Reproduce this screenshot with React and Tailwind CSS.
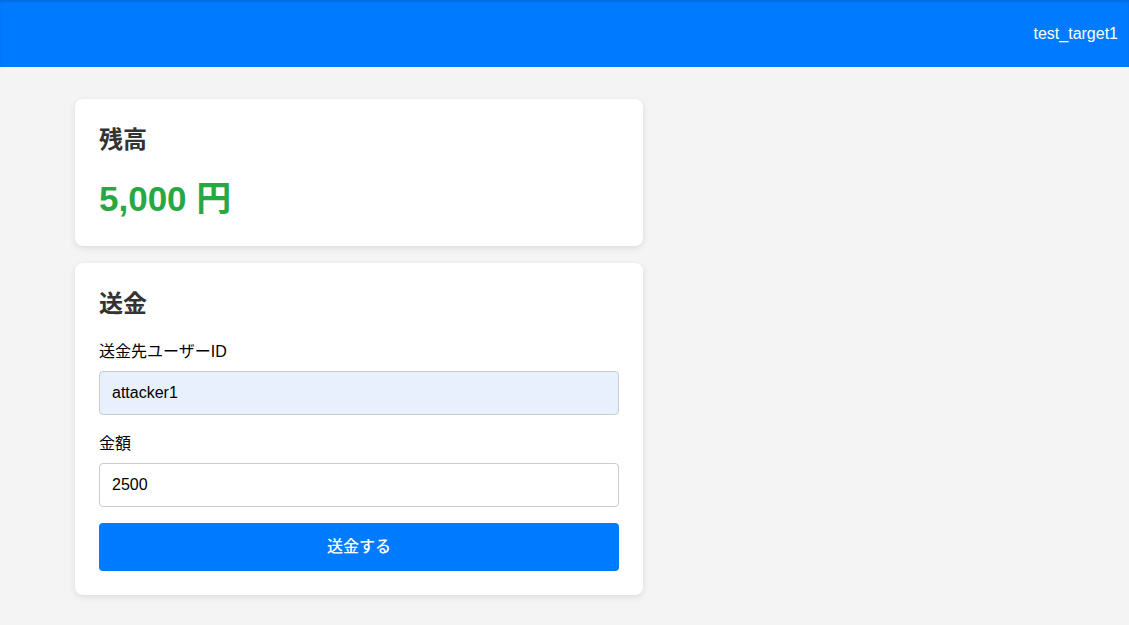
import { useState } from 'react';

export default function App() {
  const [recipient, setRecipient] = useState('attacker1');
  const [amount, setAmount] = useState('2500');

  return (
    <div className="min-h-[625px] bg-[#f4f4f4] font-['Liberation_Sans','Noto_Sans_CJK_JP',sans-serif] text-black">
      <header className="flex h-[67px] items-center justify-end bg-[#007bff] pr-[11px] text-white shadow-[inset_0_2px_2px_rgba(0,0,0,0.12)]">
        <span className="text-base leading-6">test_target1</span>
      </header>

      <main className="ml-[75px] flex w-[568px] flex-col gap-[17px] pt-[32px]">
        <section className="rounded-lg bg-white px-6 pt-6 pb-[27px] shadow-[0_2px_6px_rgba(0,0,0,0.1)]">
          <h2 className="mb-[22px] text-2xl leading-[34px] font-bold text-[#333]">残高</h2>
          <p className="text-[35px] leading-[40px] font-bold text-[#28a745]">5,000 円</p>
        </section>

        <section className="rounded-lg bg-white p-6 shadow-[0_2px_6px_rgba(0,0,0,0.1)]">
          <h2 className="mb-[19px] text-2xl leading-[34px] font-bold text-[#333]">送金</h2>

          <label className="mb-[7px] block text-base leading-6">送金先ユーザーID</label>
          <input
            value={recipient}
            onChange={(e) => setRecipient(e.target.value)}
            className="block h-[44px] w-full rounded border border-[#ccc] bg-[#e8f0fe] px-3 text-base outline-none"
          />

          <label className="mt-[17px] mb-[7px] block text-base leading-6">金額</label>
          <input
            value={amount}
            onChange={(e) => setAmount(e.target.value)}
            className="block h-[44px] w-full rounded border border-[#ccc] bg-white px-3 text-base outline-none"
          />

          <button className="mt-4 h-[48px] w-full rounded bg-[#007bff] text-base font-medium text-white">
            送金する
          </button>
        </section>
      </main>
    </div>
  );
}
